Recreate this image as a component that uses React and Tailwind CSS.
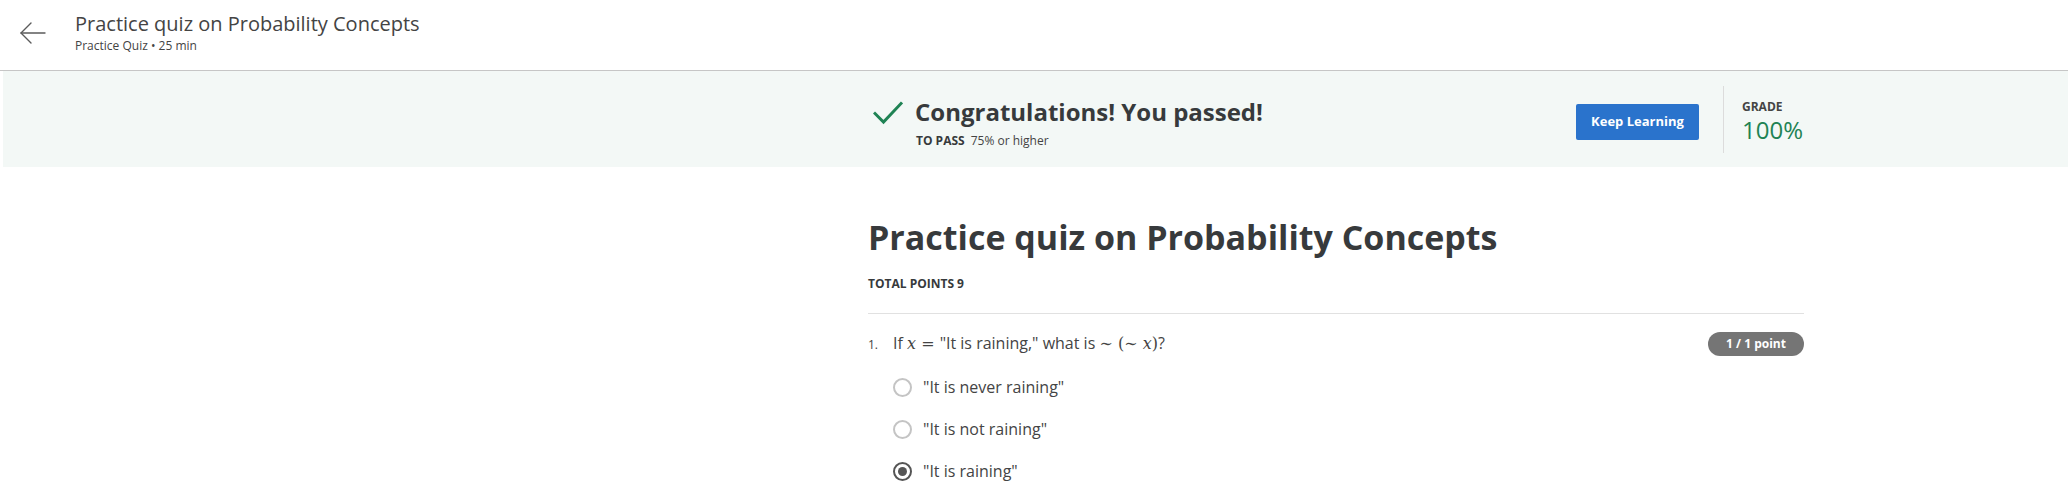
import React from "react";

const font = { fontFamily: '"Open Sans", "Liberation Sans", sans-serif' };

function BackArrow() {
  return (
    <svg width="28" height="24" viewBox="0 0 28 24" fill="none" stroke="#5b5b5b" strokeWidth="1.4" strokeLinecap="round" strokeLinejoin="round">
      <path d="M26 12H2" />
      <path d="M12 2L2 12l10 10" />
    </svg>
  );
}

function Check() {
  return (
    <svg width="30" height="24" viewBox="0 0 30 24" fill="none" stroke="#1f8354" strokeWidth="3" strokeLinecap="square">
      <path d="M2 12.5l8.5 8.5L28 2.5" />
    </svg>
  );
}

function Radio({ checked }) {
  if (checked) {
    return (
      <span className="flex h-[19px] w-[19px] items-center justify-center rounded-full border-2 border-[#555555]">
        <span className="h-[9px] w-[9px] rounded-full bg-[#555555]" />
      </span>
    );
  }
  return <span className="block h-[19px] w-[19px] rounded-full border-2 border-[#c4c4c4]" />;
}

const mathFont = { fontFamily: '"DejaVu Serif", "Liberation Serif", serif' };

export default function App() {
  return (
    <div className="min-h-[500px] bg-white text-[#373a3c]" style={font}>
      <header className="flex h-[71px] items-start border-b border-[#c6c6c6]">
        <div className="ml-[19px] mt-[21px]">
          <BackArrow />
        </div>
        <div className="ml-[28px] mt-[10px] flex flex-col">
          <span className="text-[20px] leading-[28px] text-[#444]">Practice quiz on Probability Concepts</span>
          <span className="text-[12px] leading-[16px] text-[#444]">Practice Quiz • 25 min</span>
        </div>
      </header>

      <section className="ml-[3px] h-[96px] bg-[#f3f8f6]">
        <div className="ml-[865px] flex h-full w-[936px] items-center justify-between">
          <div className="mt-[6px] flex items-start">
            <div className="ml-[5px] mt-[5px]">
              <Check />
            </div>
            <div className="ml-[12px] flex flex-col">
              <span className="text-[24px] font-bold leading-[32px] text-[#373a3c]">Congratulations! You passed!</span>
              <span className="mt-[5px] ml-[1px] text-[12px] leading-[16px] text-[#444]">
                <span className="font-bold text-[#373a3c]">TO PASS</span>
                <span className="ml-[6px]">75% or higher</span>
              </span>
            </div>
          </div>
          <div className="flex h-full items-center">
            <button className="mt-[5px] h-[36px] w-[123px] rounded-[2px] bg-[#2a73cc] text-[13px] font-bold text-white" style={font}>
              Keep Learning
            </button>
            <div className="ml-[24px] h-[67px] w-px bg-[#dcdcdc]" />
            <div className="ml-[18px] mt-[5px] flex w-[62px] flex-col">
              <span className="text-[12px] font-bold leading-[16px] text-[#444]">GRADE</span>
              <span className="text-[24px] leading-[30px] text-[#1f8354]">100%</span>
            </div>
          </div>
        </div>
      </section>

      <main className="ml-[868px] w-[936px]">
        <h1 className="mt-[47px] text-[34px] font-bold leading-[46px] text-[#373a3c]">Practice quiz on Probability Concepts</h1>
        <div className="mt-[16px] text-[12px] font-bold leading-[16px] text-[#373a3c]">TOTAL POINTS 9</div>
        <div className="mt-[21px] h-px bg-[#e1e1e1]" />
        <div className="mt-[17px] flex items-center justify-between">
          <div className="flex items-baseline">
            <span className="w-[25px] text-[12px] text-[#444]">1.</span>
            <span className="text-[16px] leading-[24px] text-[#444]">
              If <span className="italic" style={mathFont}>x</span>
              <span style={mathFont}> = </span>
              "It is raining," what is{" "}
              <span style={mathFont}>∼ (∼ <span className="italic">x</span>)</span>?
            </span>
          </div>
          <span className="flex h-[24px] w-[96px] items-center justify-center rounded-full bg-[#757575] text-[12px] font-bold text-white">
            1 / 1 point
          </span>
        </div>
        <div className="ml-[25px] mt-[19px] flex flex-col gap-[18px]">
          {[
            ['"It is never raining"', false],
            ['"It is not raining"', false],
            ['"It is raining"', true],
          ].map(([t, c]) => (
            <label key={t} className="flex items-center">
              <Radio checked={c} />
              <span className="ml-[11px] text-[16px] leading-[24px] text-[#444]">{t}</span>
            </label>
          ))}
        </div>
      </main>
    </div>
  );
}
